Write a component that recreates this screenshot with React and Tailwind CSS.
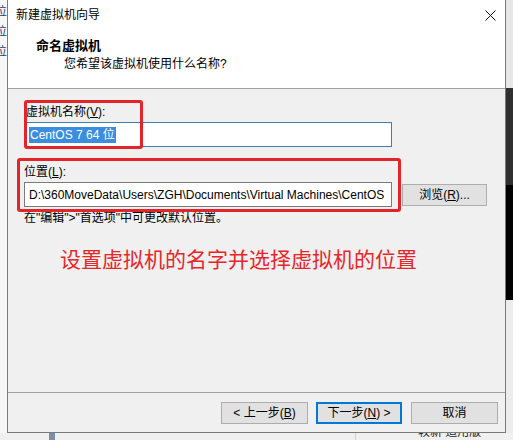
import React from "react";

const font = "font-['Liberation_Sans','Noto_Sans_CJK_SC',sans-serif]";

function Btn({ children, primary, className = "" }) {
  return (
    <div
      className={`h-[22px] flex items-center justify-center text-[12px] text-black bg-[#e1e1e1] ${
        primary ? "border-2 border-[#0078d7]" : "border border-[#adadad]"
      } ${className}`}
    >
      {children}
    </div>
  );
}

export default function App() {
  return (
    <div className={`relative w-[513px] h-[440px] overflow-hidden bg-[#f0f0f0] flex flex-col ${font}`}>
      <div className="flex h-[433px]">
        {/* window behind, left edge */}
        <div className="w-[7px] bg-[#f7f7f7] overflow-hidden flex flex-col pt-[5px] gap-[6px] text-[12px] leading-[14px] text-[#1d3f6e]">
          <span className="-ml-[5px]">位</span>
          <span className="-ml-[5px]">位</span>
          <span className="-ml-[5px]">位</span>
        </div>

        {/* dialog */}
        <div className="w-[499px] border-l border-r border-b border-[#7a7a7a] bg-[#f0f0f0] flex flex-col">
          <div className="h-[30px] bg-white flex items-center justify-between pl-[8px] pr-[9px]">
            <span className="text-[12px] text-black">新建虚拟机向导</span>
            <svg width="11" height="11" viewBox="0 0 11 11">
              <path d="M0.5 0.5 L10.5 10.5 M10.5 0.5 L0.5 10.5" stroke="#111" strokeWidth="1" />
            </svg>
          </div>
          <div className="h-[59px] bg-white border-b border-[#a0a0a0] flex flex-col pt-[8px]">
            <div className="pl-[28px] text-[13px] leading-[16px] font-bold text-black">命名虚拟机</div>
            <div className="pl-[56px] mt-[2px] text-[12px] leading-[16px] text-black">您希望该虚拟机使用什么名称?</div>
          </div>

          <div className="flex flex-col pt-[15px] text-[12px] leading-[16px] text-black">
            <div className="pl-[18px]">
              虚拟机名称(<span className="underline">V</span>):
            </div>
            <div className="ml-[18px] mt-[2px] w-[366px] h-[25px] bg-white border border-[#3c7fb1] flex items-center pl-[2px]">
              <span className="bg-[#3b8ede] text-white px-[1px] leading-[16px]">CentOS 7 64 位</span>
            </div>

            <div className="pl-[16px] mt-[17px]">
              位置(<span className="underline">L</span>):
            </div>
            <div className="flex items-center mt-[2px]">
              <div className="ml-[16px] w-[368px] h-[25px] bg-white border border-[#7a7a7a] flex items-center pl-[4px] overflow-hidden whitespace-nowrap">
                D:\360MoveData\Users\ZGH\Documents\Virtual Machines\CentOS
              </div>
              <Btn className="ml-[10px] w-[85px]">
                浏览(<span className="underline">R</span>)...
              </Btn>
            </div>
            <div className="pl-[16px] mt-[3px]">在"编辑"&gt;"首选项"中可更改默认位置。</div>

            <div className="pl-[52px] mt-[20px] text-[21px] leading-[28px] text-[#e8262a]">
              设置虚拟机的名字并选择虚拟机的位置
            </div>
          </div>

          <div className="flex-1" />

          <div className="h-[40px] border-t border-[#a0a0a0] flex justify-end items-start pt-[9px] pr-[7px]">
            <Btn className="w-[87px]">
              &lt; 上一步(<span className="underline">B</span>)
            </Btn>
            <Btn primary className="w-[86px] ml-[8px]">
              下一步(<span className="underline">N</span>) &gt;
            </Btn>
            <Btn className="w-[87px] ml-[9px]">取消</Btn>
          </div>
        </div>

        {/* window behind, right edge */}
        <div className="w-[7px] flex flex-col">
          <div className="h-[88px] bg-[#e6e6e6]" />
          <div className="h-[97px] bg-[#303030]" />
          <div className="h-[115px] bg-black" />
          <div className="flex-1 bg-[#ececec]" />
        </div>
      </div>

      {/* strip below the dialog */}
      <div className="h-[7px] flex overflow-hidden bg-[#f0f0f0]">
        <div className="ml-[49px] w-[6px] bg-[#7d8fa6]" />
        <div className="ml-[300px] w-px bg-[#d0d0d0]" />
        <div className="ml-[62px] -mt-[9px] text-[12px] leading-[16px] text-[#222] whitespace-nowrap">较新 适用版</div>
      </div>

      {/* red annotation boxes */}
      <div className="absolute left-[24px] top-[100px] w-[119px] h-[49px] border-[3px] border-[#e3242b] rounded-[3px]" />
      <div className="absolute left-[17px] top-[158px] w-[384px] h-[54px] border-[3px] border-[#e3242b] rounded-[3px]" />
    </div>
  );
}
